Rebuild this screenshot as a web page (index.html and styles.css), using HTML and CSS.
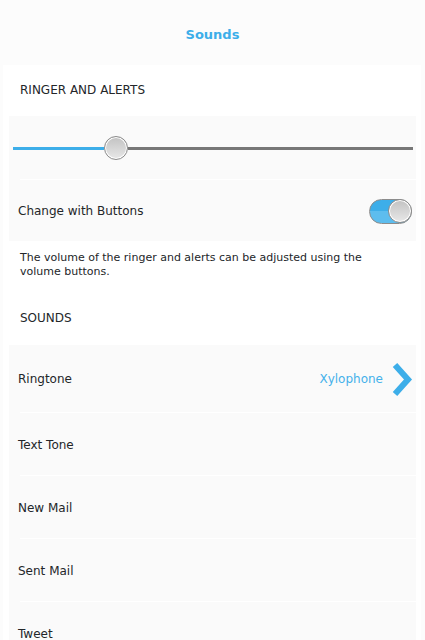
FILE: index.html
```html
<!DOCTYPE html>
<html>
<head>
<meta charset="utf-8">
<link rel="stylesheet" href="styles.css">
</head>
<body>
<header class="topbar"><span class="title">Sounds</span></header>
<main class="panel">
  <div class="section-head head-ringer">RINGER AND ALERTS</div>
  <div class="row slider-row">
    <div class="slider">
      <div class="track-fill"></div>
      <div class="thumb"></div>
      <div class="track-rest"></div>
    </div>
  </div>
  <div class="row toggle-row">
    <span class="label">Change with Buttons</span>
    <div class="switch"><div class="knob"></div></div>
  </div>
  <p class="desc">The volume of the ringer and alerts can be adjusted using the volume buttons.</p>
  <div class="section-head head-sounds">SOUNDS</div>
  <div class="list">
    <div class="row item item-tall">
      <span class="label">Ringtone</span>
      <span class="value">Xylophone</span>
      <svg class="chevron" width="21" height="33" viewBox="0 0 21 33"><polyline points="3,2 16,16.5 3,31" fill="none" stroke="#3daee9" stroke-width="6" stroke-linejoin="miter"/></svg>
    </div>
    <div class="row item"><span class="label">Text Tone</span></div>
    <div class="row item"><span class="label">New Mail</span></div>
    <div class="row item"><span class="label">Sent Mail</span></div>
    <div class="row item"><span class="label">Tweet</span></div>
  </div>
</main>
</body>
</html>
```
FILE: styles.css
```css
html, body {
  margin: 0;
  padding: 0;
  background: #fcfcfc;
  font-family: "DejaVu Sans", sans-serif;
  color: #232629;
  overflow: hidden;
}
.topbar {
  height: 65px;
  display: flex;
  align-items: center;
  justify-content: center;
}
.title {
  color: #3daee9;
  font-weight: bold;
  font-size: 13px;
  margin-top: 3px;
}
.panel {
  background: #fff;
  margin: 0 4px 0 3px;
  padding-bottom: 20px;
}
.section-head {
  font-size: 12px;
  padding-left: 17px;
  display: flex;
  align-items: center;
}
.head-ringer { height: 51px; padding-bottom: 2px; box-sizing: border-box; }
.head-sounds { height: 54px; }
.row {
  background: #fafafa;
  margin: 0 5px 0 6px;
  position: relative;
}
.slider-row {
  height: 64px;
  display: flex;
  align-items: center;
  padding: 0 3px 0 4px;
  box-sizing: border-box;
}
.slider-row::after, .item::after {
  content: "";
  position: absolute;
  left: 11px;
  right: 0;
  bottom: 0;
  height: 1px;
  background: #ffffff;
}
.slider {
  flex: 1;
  display: flex;
  align-items: center;
}
.track-fill {
  width: 91px;
  height: 3px;
  background: #3daee9;
}
.track-rest {
  flex: 1;
  height: 3px;
  background: #777777;
}
.thumb, .knob {
  width: 22px;
  height: 22px;
  border-radius: 50%;
  border: 1px solid #8c8c8c;
  box-shadow: inset 0 0 0 1px #ffffff;
  background: linear-gradient(#c2c2c2, #e8e8e8);
  flex: none;
}
.toggle-row {
  height: 61px;
  display: flex;
  align-items: center;
  justify-content: space-between;
  padding: 0 4px 0 9px;
}
.label {
  font-size: 12px;
}
.switch {
  width: 41px;
  height: 23px;
  border-radius: 13px;
  border: 1px solid #8c8c8c;
  background: linear-gradient(#3daee9 0%, #3daee9 50%, #5dbdee 50%, #5dbdee 100%);
  position: relative;
  margin-top: 1px;
}
.knob {
  position: absolute;
  right: -1px;
  top: -1px;
}
.desc {
  margin: 0;
  padding: 10px 40px 12px 17px;
  font-size: 11px;
  line-height: 14px;
  height: 28px;
}
.list { display: flex; flex-direction: column; }
.item {
  height: 63px;
  display: flex;
  align-items: center;
  padding: 0 3px 0 9px;
}
.item-tall { height: 68px; }
.item .label { flex: 1; }
.value {
  color: #45b1ea;
  font-size: 12px;
  margin-right: 9px;
}
.chevron { display: block; }
```
